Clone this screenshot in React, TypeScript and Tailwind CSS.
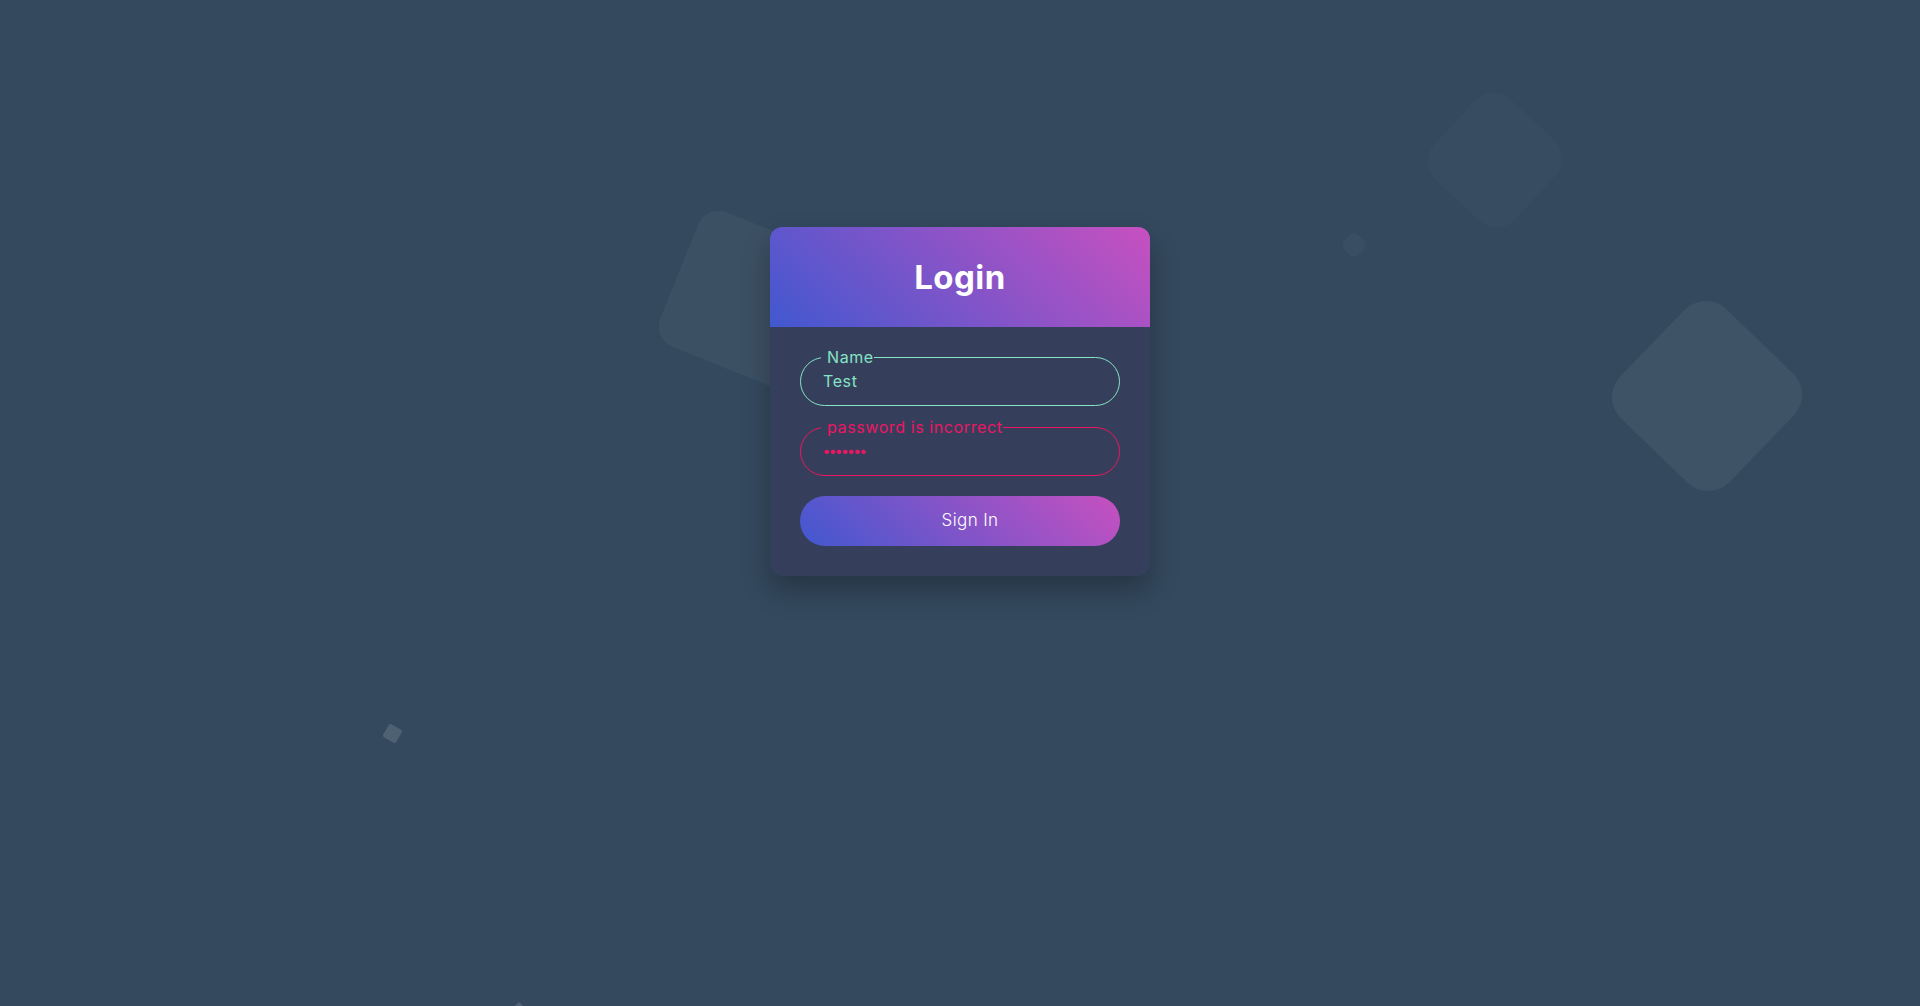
import { useState } from "react";

const font = { fontFamily: "Inter, 'Noto Sans', sans-serif" };

export default function App() {
  const [name, setName] = useState("Test");
  const [password, setPassword] = useState("1234567");

  return (
    <div className="relative h-[1006px] w-full overflow-hidden bg-[#34495e]" style={font}>
      {/* floating background squares */}
      <div className="absolute left-[674px] top-[226px] h-[145px] w-[145px] rotate-[22deg] rounded-[22px] bg-white/[0.045]" />
      <div className="absolute left-[1440px] top-[105px] h-[110px] w-[110px] rotate-[43deg] rounded-[25px] bg-white/[0.02]" />
      <div className="absolute left-[1631px] top-[320px] h-[152px] w-[152px] rotate-[44deg] rounded-[30px] bg-white/[0.055]" />
      <div className="absolute left-[1344px] top-[235px] h-[20px] w-[20px] rotate-45 rounded-md bg-white/[0.03]" />
      <div className="absolute left-[385px] top-[726px] h-[15px] w-[15px] rotate-[30deg] rounded-[2px] bg-white/[0.13]" />
      <div className="absolute left-[509px] top-[1006px] h-[20px] w-[20px] rotate-45 rounded-[2px] bg-white/[0.13]" />

      <div className="relative mx-auto mt-[227px] w-[380px] overflow-hidden rounded-xl bg-[#353f5c] shadow-[0_14px_28px_rgba(0,0,0,0.28)]">
        <div className="flex h-[100px] items-center justify-center bg-[linear-gradient(43deg,#4158d0,#c850c0)]">
          <h1 className="mt-0.5 text-[33px] font-bold tracking-[0.5px] text-white">Login</h1>
        </div>

        <form className="flex flex-col px-[30px] pb-[30px] pt-[18px]" onSubmit={(e) => e.preventDefault()}>
          <fieldset className="rounded-full border border-[#86e3c4] pb-3 pl-5 pr-5">
            <legend className="pl-1.5 pr-0 text-base leading-6 tracking-[0.6px] text-[#86e3c4]">Name</legend>
            <input
              value={name}
              onChange={(e) => setName(e.target.value)}
              className="block h-6 w-full bg-transparent px-0.5 text-base leading-6 tracking-[0.6px] text-[#86e3c4] outline-none"
            />
          </fieldset>

          <fieldset className="mt-[9px] rounded-full border border-[#ef1462] pb-3 pl-5 pr-5">
            <legend className="pl-1.5 pr-0 text-base leading-6 tracking-[0.6px] text-[#ef1462]">
              password is incorrect
            </legend>
            <input
              type="password"
              value={password}
              onChange={(e) => setPassword(e.target.value)}
              className="block h-6 w-full bg-transparent px-0.5 text-[14px] font-bold leading-6 tracking-[-0.5px] text-[#ef1462] outline-none"
            />
          </fieldset>

          <button
            type="submit"
            className="mt-5 flex h-[50px] items-center justify-center rounded-full bg-[linear-gradient(43deg,#4158d0,#c850c0)] pl-5 text-[17px] font-light tracking-[0.4px] text-white"
          >
            Sign In
          </button>
        </form>
      </div>
    </div>
  );
}
